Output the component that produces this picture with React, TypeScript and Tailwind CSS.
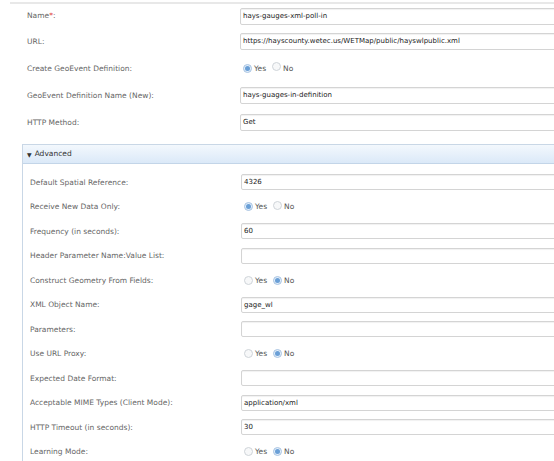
const font = { fontFamily: '"DejaVu Sans", Verdana, sans-serif' }

function Radio({ checked }: { checked: boolean }) {
  return (
    <span
      className={
        'inline-flex items-center justify-center w-[9px] h-[9px] rounded-full border ' +
        (checked ? 'border-[#a9c4e2] bg-[#e2eefa]' : 'border-[#cfd4d9] bg-[#f7f8f9]')
      }
    >
      {checked && <span className="w-[5px] h-[5px] rounded-full bg-[#6a9fd6]" />}
    </span>
  )
}

function YesNo({ value }: { value: boolean }) {
  return (
    <div className="flex items-center text-[7.5px] text-[#555] pl-[3px]">
      <Radio checked={value} />
      <span className="ml-[2px]">Yes</span>
      <span className="ml-[6px]">
        <Radio checked={!value} />
      </span>
      <span className="ml-[2px]">No</span>
    </div>
  )
}

function TextBox({ value, h = 'h-[17px]' }: { value?: string; h?: string }) {
  return (
    <div
      className={
        h +
        ' w-[360px] shrink-0 flex items-center px-[2px] border border-[#d4d4d4] rounded-[2px] bg-white text-[7px] text-[#222] shadow-[inset_0_1px_1px_rgba(0,0,0,0.06)]'
      }
    >
      {value}
    </div>
  )
}

type Field = { label: React.ReactNode; text?: string; radio?: boolean }

const top: Field[] = [
  {
    label: (
      <>
        Name<span className="text-[#e0403a]">*</span>:
      </>
    ),
    text: 'hays-gauges-xml-poll-in',
  },
  { label: 'URL:', text: 'https://hayscounty.wetec.us/WETMap/public/hayswlpublic.xml' },
  { label: 'Create GeoEvent Definition:', radio: true },
  { label: 'GeoEvent Definition Name (New):', text: 'hays-guages-in-definition' },
  { label: 'HTTP Method:', text: 'Get' },
]

const advanced: Field[] = [
  { label: 'Default Spatial Reference:', text: '4326' },
  { label: 'Receive New Data Only:', radio: true },
  { label: 'Frequency (in seconds):', text: '60' },
  { label: 'Header Parameter Name:Value List:', text: '' },
  { label: 'Construct Geometry From Fields:', radio: false },
  { label: 'XML Object Name:', text: 'gage_wl' },
  { label: 'Parameters:', text: '' },
  { label: 'Use URL Proxy:', radio: false },
  { label: 'Expected Date Format:', text: '' },
  { label: 'Acceptable MIME Types (Client Mode):', text: 'application/xml' },
  { label: 'HTTP Timeout (in seconds):', text: '30' },
  { label: 'Learning Mode:', radio: false },
]

export default function App() {
  return (
    <div className="w-[554px] h-[461px] overflow-hidden bg-white" style={font}>
      <div className="pt-[2px] pl-[10px]">
        <div className="border-t-2 border-[#e8e8e8]" />
        <div className="pl-[17px]">
          {top.map((f, i) => (
            <div key={i} className={'flex items-center ' + (i === 0 ? 'h-[24px]' : 'h-[27px]')}>
              <div className="w-[213px] shrink-0 text-[7.5px] text-[#666]">{f.label}</div>
              {f.radio !== undefined ? <YesNo value={f.radio} /> : <TextBox value={f.text} />}
            </div>
          ))}
        </div>
        <div className="mt-[8px] ml-[12px] border-l border-t border-[#c9d7e6]">
          <div className="h-[19px] flex items-center pl-[4px] border-b border-[#c3d5e8] bg-gradient-to-b from-[#f3f8fd] to-[#dbe9f8] text-[7.5px] text-[#333]">
            <span className="text-[6px] mr-[3px]">▼</span>
            Advanced
          </div>
          <div className="pl-[7px] pt-[6px]">
            {advanced.map((f, i) => (
              <div key={i} className="flex items-center h-[24.5px]">
                <div className="w-[211px] shrink-0 text-[7.5px] text-[#666]">{f.label}</div>
                {f.radio !== undefined ? (
                  <YesNo value={f.radio} />
                ) : (
                  <TextBox value={f.text} h="h-[16px]" />
                )}
              </div>
            ))}
          </div>
        </div>
      </div>
    </div>
  )
}
